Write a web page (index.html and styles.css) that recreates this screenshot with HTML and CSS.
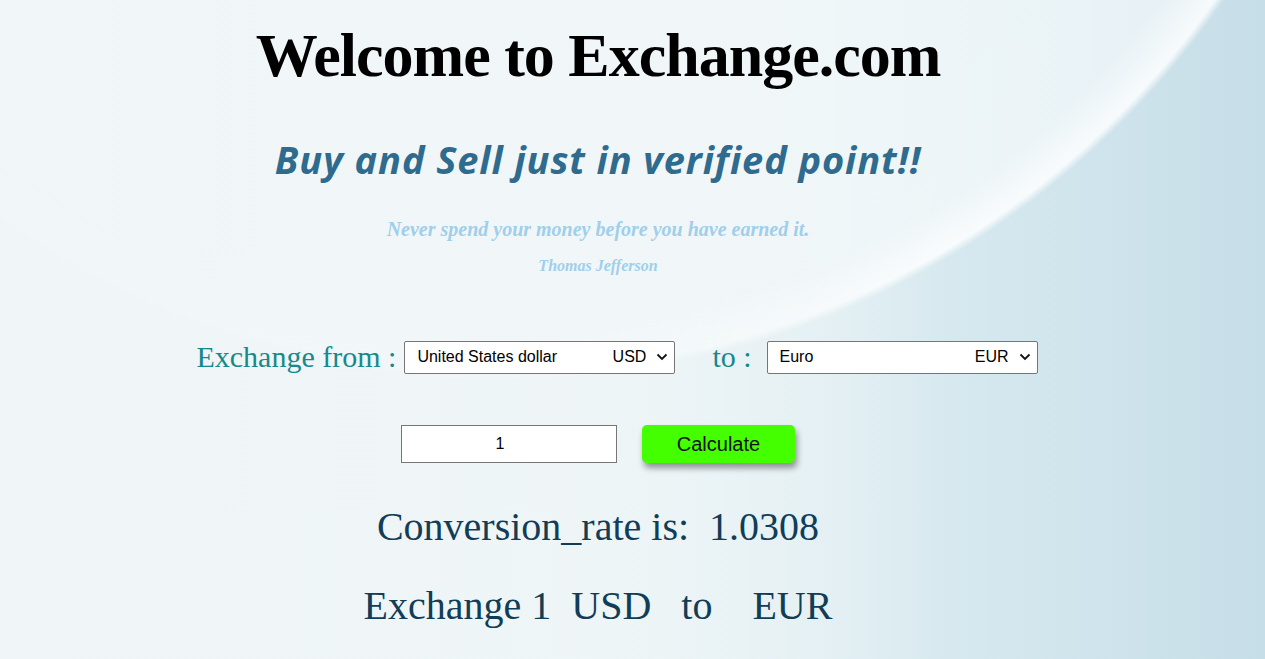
FILE: index.html
```html
<!DOCTYPE html>
<html lang="en">
<head>
<meta charset="utf-8">
<title>Exchange.com</title>
<link rel="stylesheet" href="styles.css">
</head>
<body>
<main class="page">
  <h1 class="title">Welcome to Exchange.com</h1>
  <h2 class="subtitle">Buy and Sell just in verified point!!</h2>
  <p class="quote">Never spend your money before you have earned it.</p>
  <p class="author">Thomas Jefferson</p>

  <div class="pair-row">
    <label class="pair-label">Exchange from :</label>
    <div class="select">
      <span class="sel-name">United States dollar</span>
      <span class="sel-code">USD</span>
      <svg class="chev" viewBox="0 0 12 8" width="12" height="8"><path d="M1.5 1.5 L6 6 L10.5 1.5" fill="none" stroke="#111" stroke-width="1.8"/></svg>
    </div>
    <label class="pair-label to">to :</label>
    <div class="select">
      <span class="sel-name">Euro</span>
      <span class="sel-code">EUR</span>
      <svg class="chev" viewBox="0 0 12 8" width="12" height="8"><path d="M1.5 1.5 L6 6 L10.5 1.5" fill="none" stroke="#111" stroke-width="1.8"/></svg>
    </div>
  </div>

  <div class="calc-row">
    <div class="amount">1</div>
    <button class="calc-btn" type="button">Calculate</button>
  </div>

  <p class="result">Conversion_rate is:&nbsp; 1.0308</p>
  <p class="result result-2">Exchange 1&nbsp; USD &nbsp; to &nbsp;&nbsp; EUR</p>
</main>
</body>
</html>
```

FILE: styles.css
```css
html, body {
  margin: 0;
  padding: 0;
  height: 100%;
}

body {
  font-family: "Liberation Serif", "Times New Roman", serif;
  background:
    linear-gradient(90deg, rgba(240,246,248,0.92) 0%, rgba(240,246,248,0.82) 45%, rgba(240,246,248,0.45) 63%, rgba(240,246,248,0) 74%),
    radial-gradient(circle at 500px -500px, rgba(255,255,255,0.5) 0, rgba(255,255,255,0.55) 830px, rgba(255,255,255,0.85) 872px, rgba(255,255,255,0) 880px),
    linear-gradient(90deg, #ecf3f5 0%, #e8f2f4 45%, #dcecf1 68%, #d1e5ed 84%, #c6dee8 100%);
  overflow: hidden;
}

.page {
  width: 1196px;
  display: flex;
  flex-direction: column;
  align-items: center;
}

.title {
  margin: 23px 0 0;
  font-size: 62px;
  line-height: 64px;
  letter-spacing: -1px;
  font-weight: bold;
  color: #000;
}

.subtitle {
  margin: 48px 0 0;
  font-family: "Open Sans", "Lato", sans-serif;
  font-style: italic;
  font-weight: bold;
  font-size: 38px;
  line-height: 48px;
  letter-spacing: 0.9px;
  color: #2e6b8e;
}

.quote {
  margin: 34px 0 0;
  font-style: italic;
  font-weight: bold;
  font-size: 20px;
  line-height: 24px;
  color: #9fcfeb;
}

.author {
  margin: 15px 0 0;
  font-style: italic;
  font-weight: bold;
  font-size: 16px;
  line-height: 20px;
  color: #9fcfeb;
}

.pair-row {
  margin-top: 64px;
  margin-left: 38px;
  display: flex;
  align-items: center;
}

.pair-label {
  font-size: 30px;
  line-height: 34px;
  color: #17898a;
  margin-right: 8px;
}

.pair-label.to {
  margin-left: 37px;
  margin-right: 15px;
}

.select {
  box-sizing: border-box;
  width: 271px;
  height: 33px;
  background: #fff;
  border: 1px solid #767676;
  border-radius: 2px;
  display: flex;
  align-items: center;
  padding: 0 6px 0 12px;
  font-family: "Liberation Sans", Arial, sans-serif;
  font-size: 16px;
  color: #000;
}

.sel-name { flex: 1; }
.sel-code { margin-right: 10px; }
.chev { display: block; }

.calc-row {
  margin-top: 51px;
  display: flex;
  align-items: center;
}

.amount {
  box-sizing: border-box;
  width: 216px;
  height: 38px;
  background: #fff;
  border: 1px solid #767676;
  display: flex;
  align-items: center;
  justify-content: center;
  padding-right: 18px;
  font-family: "Liberation Sans", Arial, sans-serif;
  font-size: 16px;
  color: #000;
}

.calc-btn {
  margin-left: 25px;
  width: 153px;
  height: 38px;
  border: none;
  border-radius: 5px;
  background: #44ff00;
  box-shadow: 2px 5px 6px rgba(0,0,0,0.4);
  font-family: "Liberation Sans", Arial, sans-serif;
  font-size: 20px;
  color: #111;
  padding: 0;
}

.result {
  margin: 40px 0 0;
  font-size: 40px;
  line-height: 48px;
  color: #123d56;
}

.result-2 {
  margin-top: 31px;
}
```
